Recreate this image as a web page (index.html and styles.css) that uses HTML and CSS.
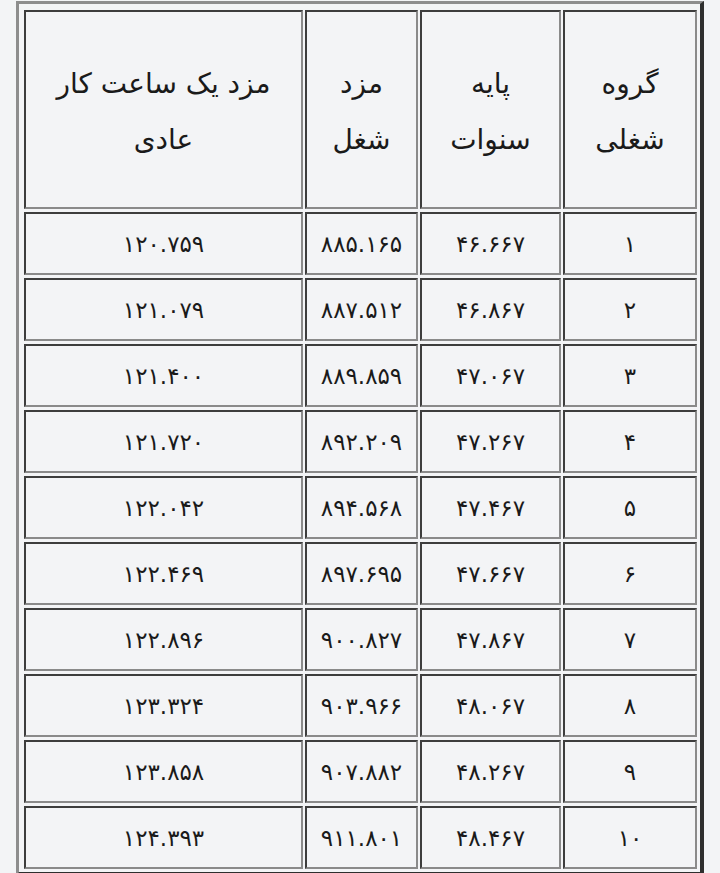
FILE: index.html
```html
<!DOCTYPE html>
<html lang="fa" dir="rtl">
<head>
<meta charset="utf-8">
<link rel="stylesheet" href="styles.css">
<title>جدول مزد</title>
</head>
<body>
<div class="page">
<table class="wages">
<thead>
<tr>
<th class="c-group">گروه<br>شغلی</th>
<th class="c-base">پایه<br>سنوات</th>
<th class="c-job">مزد<br>شغل</th>
<th class="c-hour">مزد یک ساعت کار<br>عادی</th>
</tr>
</thead>
<tbody>
<tr><td>۱</td><td>۴۶.۶۶۷</td><td>۸۸۵.۱۶۵</td><td>۱۲۰.۷۵۹</td></tr>
<tr><td>۲</td><td>۴۶.۸۶۷</td><td>۸۸۷.۵۱۲</td><td>۱۲۱.۰۷۹</td></tr>
<tr><td>۳</td><td>۴۷.۰۶۷</td><td>۸۸۹.۸۵۹</td><td>۱۲۱.۴۰۰</td></tr>
<tr><td>۴</td><td>۴۷.۲۶۷</td><td>۸۹۲.۲۰۹</td><td>۱۲۱.۷۲۰</td></tr>
<tr><td>۵</td><td>۴۷.۴۶۷</td><td>۸۹۴.۵۶۸</td><td>۱۲۲.۰۴۲</td></tr>
<tr><td>۶</td><td>۴۷.۶۶۷</td><td>۸۹۷.۶۹۵</td><td>۱۲۲.۴۶۹</td></tr>
<tr><td>۷</td><td>۴۷.۸۶۷</td><td>۹۰۰.۸۲۷</td><td>۱۲۲.۸۹۶</td></tr>
<tr><td>۸</td><td>۴۸.۰۶۷</td><td>۹۰۳.۹۶۶</td><td>۱۲۳.۳۲۴</td></tr>
<tr><td>۹</td><td>۴۸.۲۶۷</td><td>۹۰۷.۸۸۲</td><td>۱۲۳.۸۵۸</td></tr>
<tr><td>۱۰</td><td>۴۸.۴۶۷</td><td>۹۱۱.۸۰۱</td><td>۱۲۴.۳۹۳</td></tr>
</tbody>
</table>
</div>
</body>
</html>
```
FILE: styles.css
```css
html, body {
  margin: 0;
  padding: 0;
  background: #f3f4f6;
}
body {
  font-family: "DejaVu Sans", "Noto Sans", sans-serif;
  color: #111;
}
.page {
  padding: 1px 16px 0 16px;
}
.wages {
  width: 688px;
  table-layout: fixed;
  border-collapse: separate;
  border-spacing: 2px 3px;
  padding: 3px 1px 0 3px;
  border-style: solid;
  border-width: 3px 4px 4px 3px;
  border-color: #8d8d8d #2e2e2e #2e2e2e #8d8d8d;
  background: #f3f4f6;
}
.wages th,
.wages td {
  box-sizing: border-box;
  border-style: solid;
  border-width: 2px;
  border-color: #3d3d3d #8a8a8a #8a8a8a #3d3d3d;
  text-align: center;
  vertical-align: middle;
  padding: 0;
  font-size: 23px;
  color: #1a1a1a;
}
.wages th {
  height: 199px;
  font-weight: normal;
  font-size: 28px;
  line-height: 56px;
  padding-top: 4px;
}
.wages td {
  height: 63px;
  padding-top: 1px;
}
.c-group { width: 134px; }
.c-base { width: 141px; }
.c-job { width: 113px; }
.c-hour { width: 279px; }
```
